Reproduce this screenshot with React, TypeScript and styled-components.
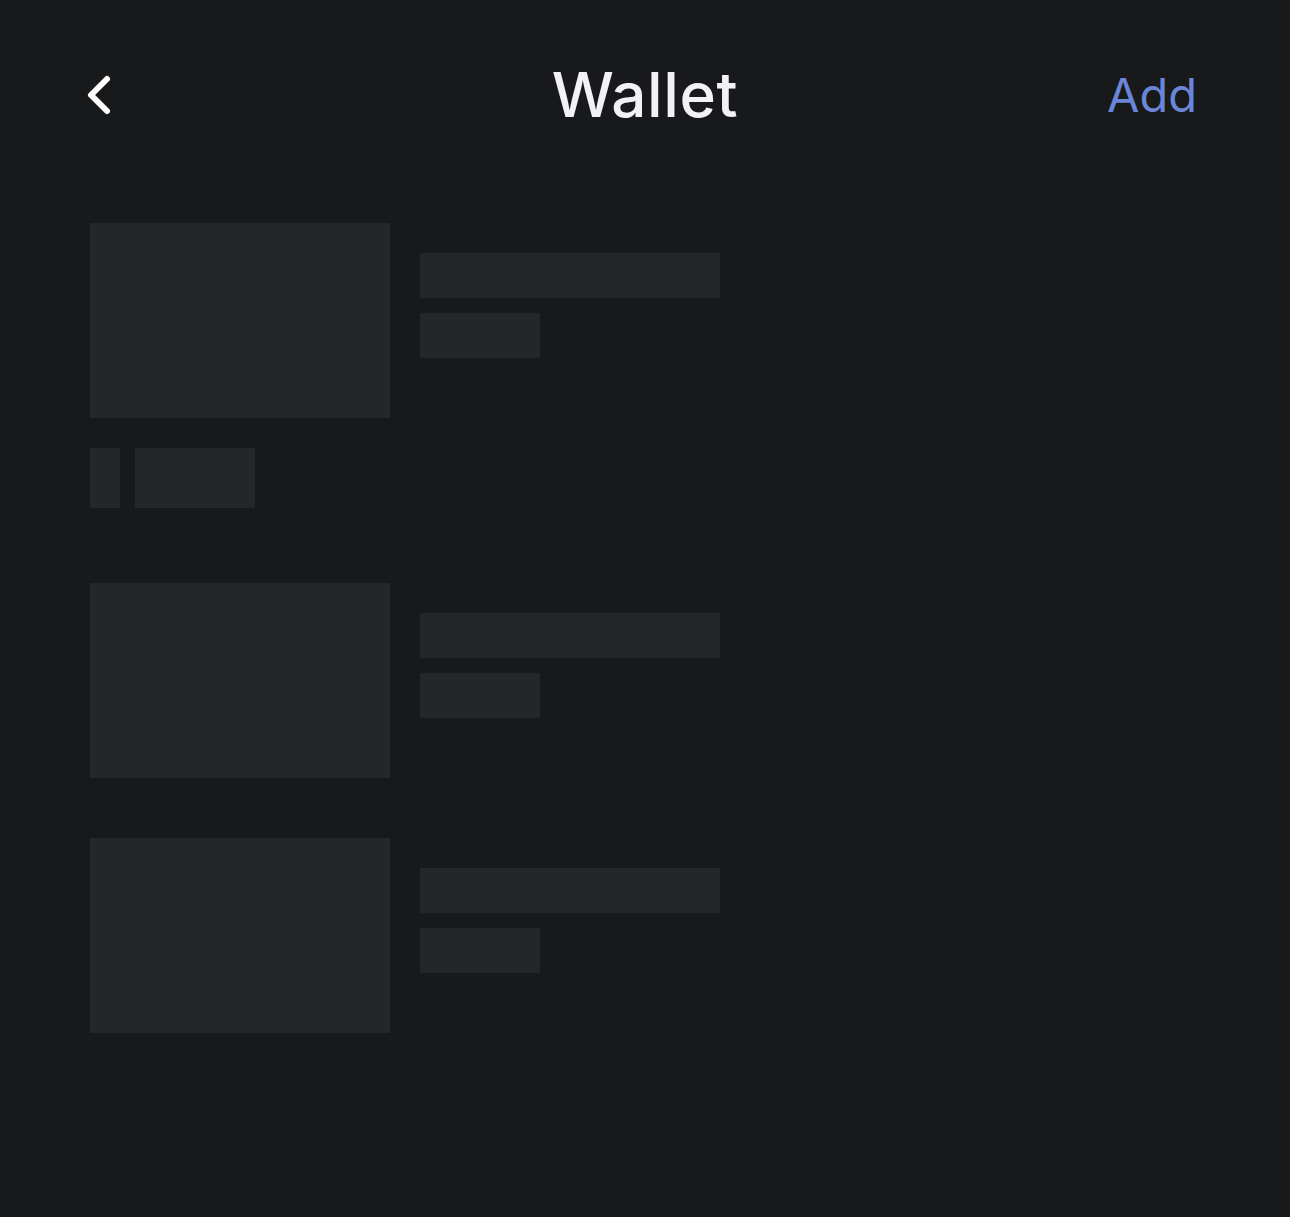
import React from "react";
import styled, { createGlobalStyle } from "styled-components";

const Global = createGlobalStyle`
  html, body { margin: 0; padding: 0; background: #18191b; }
  body { font-family: Inter, "Noto Sans", sans-serif; }
`;

const Page = styled.div`
  width: 1290px;
  min-height: 1217px;
  background: #18191b;
  box-sizing: border-box;
`;

const Header = styled.header`
  height: 190px;
  display: grid;
  grid-template-columns: 1fr auto 1fr;
  align-items: center;
  align-content: start;
  padding: 58px 90px 0;
  box-sizing: border-box;
`;

const BackButton = styled.button`
  justify-self: start;
  background: none;
  border: 0;
  padding: 0;
  margin-left: -4px;
  width: 40px;
  height: 74px;
  display: flex;
  align-items: center;
  cursor: pointer;
`;

const Title = styled.h1`
  margin: 0;
  font-size: 62px;
  font-weight: 500;
  color: #f2f2f4;
  letter-spacing: 0.6px;
  line-height: 74px;
`;

const AddButton = styled.button`
  justify-self: end;
  background: none;
  border: 0;
  padding: 0;
  margin-right: 3px;
  font-family: Inter, "Noto Sans", sans-serif;
  font-size: 47px;
  font-weight: 400;
  color: #6b86d6;
  line-height: 74px;
  cursor: pointer;
`;

const List = styled.div`
  display: flex;
  flex-direction: column;
  gap: 60px;
  padding: 33px 90px 0;
`;

const Item = styled.div<{ $extra?: boolean }>`
  display: flex;
  flex-direction: column;
  gap: 30px;
  padding-bottom: ${(p) => (p.$extra ? "15px" : "0")};
`;

const Row = styled.div`
  display: flex;
  gap: 30px;
`;

const Thumb = styled.div`
  width: 300px;
  height: 195px;
  background: #252628;
`;

const Lines = styled.div`
  display: flex;
  flex-direction: column;
  gap: 15px;
  padding-top: 30px;
`;

const Bar = styled.div<{ $w: number; $h?: number }>`
  width: ${(p) => p.$w}px;
  height: ${(p) => p.$h ?? 45}px;
  background: #252628;
`;

const Chips = styled.div`
  display: flex;
  gap: 15px;
`;

const Card = ({ extra }: { extra?: boolean }) => (
  <Item $extra={extra}>
    <Row>
      <Thumb />
      <Lines>
        <Bar $w={300} />
        <Bar $w={120} />
      </Lines>
    </Row>
    {extra && (
      <Chips>
        <Bar $w={30} $h={60} />
        <Bar $w={120} $h={60} />
      </Chips>
    )}
  </Item>
);

export default function App() {
  return (
    <Page>
      <Global />
      <Header>
        <BackButton aria-label="Back">
          <svg width="30" height="44" viewBox="0 0 30 44">
            <polyline
              points="21,6 5,22 21,38"
              fill="none"
              stroke="#ffffff"
              strokeWidth="6"
              strokeLinecap="round"
              strokeLinejoin="round"
            />
          </svg>
        </BackButton>
        <Title>Wallet</Title>
        <AddButton>Add</AddButton>
      </Header>
      <List>
        <Card extra />
        <Card />
        <Card />
      </List>
    </Page>
  );
}
